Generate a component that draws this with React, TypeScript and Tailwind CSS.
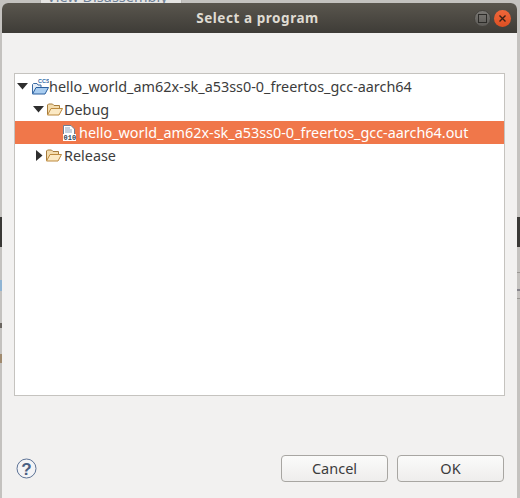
import type { ReactNode } from 'react';

const font = { fontFamily: '"Noto Sans", sans-serif' };

function FolderIcon() {
  return (
    <svg width="16" height="13" viewBox="0 0 16 13" className="shrink-0">
      <path d="M0.5 11.5V2L1.5 1H5.5L7 2.5H12.5V5" fill="#f3dcae" stroke="#a67c3c" />
      <path d="M0.5 12L4 5.5H15.5L12 12Z" fill="#fbe9c4" stroke="#bd8a3e" />
    </svg>
  );
}

function ProjectIcon() {
  return (
    <svg width="17" height="17" viewBox="0 0 17 17" className="shrink-0">
      <path d="M0.5 15.5V6.5L1.5 5.5H5L6 7H9V9" fill="#e6eef7" stroke="#3d6ba3" />
      <path d="M0.5 16L4 9.5H16.5L13 16Z" fill="#a9cdf0" stroke="#2a5f9e" />
      <text x="6" y="5" fontSize="5.5" fontWeight="700" fill="#2f6ba8" style={{ fontFamily: '"Liberation Sans", sans-serif' }}>CCS</text>
    </svg>
  );
}

function BinaryIcon() {
  return (
    <svg width="13" height="16" viewBox="0 0 13 16" className="shrink-0">
      <path d="M0.5 0.5H8L11.5 4V15.5H0.5Z" fill="#ffffff" stroke="#6f7f95" />
      <path d="M2 3H7M2 5H9M2 7H9" stroke="#8ea3bd" />
      <rect x="0" y="9" width="13" height="7" fill="#ffffff" />
      <text x="0.5" y="15" fontSize="7" fontWeight="700" fill="#2f3f55" style={{ fontFamily: '"Liberation Mono", monospace' }}>010</text>
    </svg>
  );
}

function Expanded() {
  return (
    <svg width="11" height="7" viewBox="0 0 11 7" className="shrink-0">
      <path d="M0 0H11L5.5 6.5Z" fill="#2e2e2e" />
    </svg>
  );
}

function Collapsed() {
  return (
    <svg width="7" height="11" viewBox="0 0 7 11" className="shrink-0">
      <path d="M0 0V11L6.5 5.5Z" fill="#2e2e2e" />
    </svg>
  );
}

function HelpIcon() {
  return (
    <svg width="21" height="21" viewBox="0 0 21 21">
      <circle cx="10.5" cy="10.5" r="9.5" fill="#f4f4f6" stroke="#5d7396" />
      <text x="10.5" y="16.5" textAnchor="middle" fontSize="17" fontWeight="700" fill="#4a5f82" style={{ fontFamily: '"Liberation Sans", sans-serif' }}>?</text>
    </svg>
  );
}

function TreeRow({ className, children }: { className: string; children: ReactNode }) {
  return <div className={`flex h-[23px] items-center whitespace-nowrap ${className}`}>{children}</div>;
}

function DialogButton({ label }: { label: string }) {
  return (
    <button className="h-[27px] w-[107px] rounded-[4px] border border-[#a8a6a2] bg-gradient-to-b from-[#fbfbfa] to-[#eeedec] text-[14.5px] text-[#3c3c3c]">
      {label}
    </button>
  );
}

export default function App() {
  return (
    <div className="relative h-[498px] w-[520px] overflow-hidden bg-[#c4c2bf] pl-[2px] pr-[3px] pt-[3px]" style={font}>
      {/* bits of the window behind the dialog */}
      <div className="absolute left-[40px] top-0 h-[3px] w-[142px] overflow-hidden border-x border-[#b9b7b4] bg-[#e6e5e3]">
        <span className="absolute left-[6px] top-[-13px] text-[14.5px] leading-[18px] whitespace-nowrap text-[#6d7f96]">View Disassembly</span>
      </div>
      <div className="absolute left-0 top-[217px] h-[30px] w-[2px] bg-[#3a3936]" />
      <div className="absolute left-0 top-[280px] h-[11px] w-[2px] bg-[#8fb4d3]" />
      <div className="absolute left-0 top-[323px] h-[5px] w-[2px] bg-[#6b6660]" />
      <div className="absolute left-0 top-[354px] h-[9px] w-[2px] bg-[#a08a6e]" />
      <div className="absolute right-0 top-[217px] h-[30px] w-[3px] bg-[#3a3936]" />
      <div className="absolute right-0 top-[272px] h-px w-[3px] bg-[#9a9894]" />
      <div className="absolute right-0 top-[289px] h-[2px] w-[3px] bg-[#85838a]" />
      <div className="absolute right-0 top-[298px] h-px w-[3px] bg-[#9a9894]" />

      <div className="relative flex h-[495px] flex-col overflow-hidden rounded-t-[6px] bg-[#f2f1f0]">
        <div className="relative flex h-[30px] shrink-0 items-center justify-center bg-gradient-to-b from-[#5a564e] to-[#3e3c37] pr-[4px]">
          <span className="text-[13.5px] font-bold tracking-[0.55px] text-[#dfdbd2]">Select a program</span>
          <div className="absolute right-[6px] top-[7px] flex items-center gap-[3px]">
            <div className="flex h-[17px] w-[17px] items-center justify-center rounded-full border border-[#45433e] bg-gradient-to-b from-[#7a7874] to-[#5c5a56]">
              <div className="h-[9px] w-[9px] border border-[#2c2b28]" />
            </div>
            <div className="flex h-[17px] w-[17px] items-center justify-center rounded-full bg-gradient-to-b from-[#f0673a] to-[#dd4f22]">
              <svg width="9" height="9" viewBox="0 0 9 9">
                <path d="M1.5 1.5L7.5 7.5M7.5 1.5L1.5 7.5" stroke="#3a2014" strokeWidth="1.4" />
              </svg>
            </div>
          </div>
        </div>

        <div className="mx-[12px] mt-[40px] h-[323px] shrink-0 border border-[#c5c3bf] bg-white pt-[1px] text-[14.4px] text-[#3c3c3c]">
          <TreeRow className="pl-[2px]">
            <Expanded />
            <span className="ml-[4px]"><ProjectIcon /></span>
            <span>hello_world_am62x-sk_a53ss0-0_freertos_gcc-aarch64</span>
          </TreeRow>
          <TreeRow className="pl-[18px]">
            <Expanded />
            <span className="ml-[3px]"><FolderIcon /></span>
            <span className="ml-px">Debug</span>
          </TreeRow>
          <TreeRow className="bg-[#f0774a] pl-[48px] text-white">
            <BinaryIcon />
            <span className="ml-[3px]">hello_world_am62x-sk_a53ss0-0_freertos_gcc-aarch64.out</span>
          </TreeRow>
          <TreeRow className="pl-[21px]">
            <Collapsed />
            <span className="ml-[3px]"><FolderIcon /></span>
            <span className="ml-[2px]">Release</span>
          </TreeRow>
        </div>

        <div className="mt-[59px] flex items-center pl-[14px] pr-[13px]">
          <HelpIcon />
          <div className="ml-auto flex gap-[9px]">
            <DialogButton label="Cancel" />
            <DialogButton label="OK" />
          </div>
        </div>
      </div>
    </div>
  );
}
